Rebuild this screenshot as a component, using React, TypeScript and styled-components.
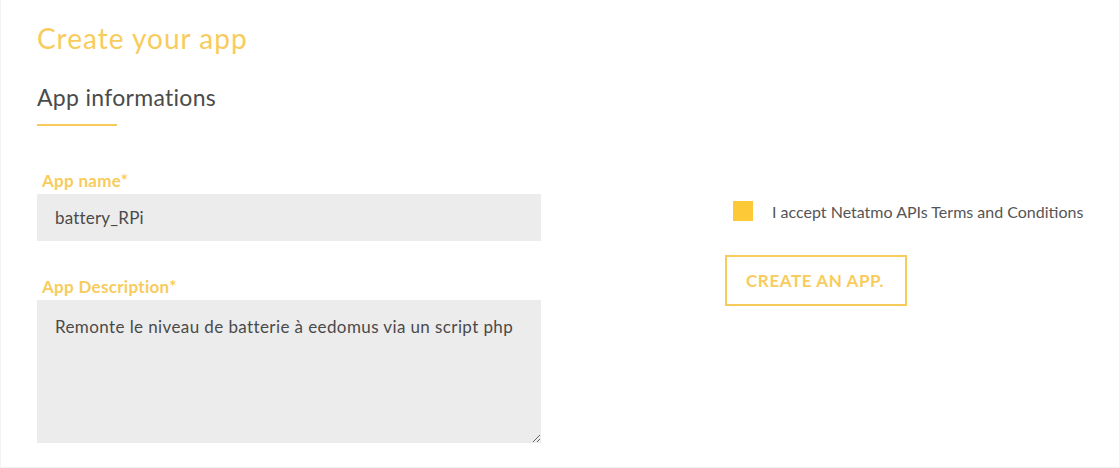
import React from "react";
import styled, { createGlobalStyle } from "styled-components";

const FONT = `Lato, "Liberation Sans", sans-serif`;

const Global = createGlobalStyle`
  html, body { margin: 0; padding: 0; background: #fff; }
  body { font-family: ${FONT}; }
  * { box-sizing: border-box; }
`;

const Page = styled.div`
  width: 1120px;
  height: 468px;
  border: 1px solid #f3f3f3;
  border-top: none;
  padding: 21px 0 0 36px;
`;

const Title = styled.h1`
  margin: 0;
  font-size: 28px;
  letter-spacing: 1px;
  font-weight: 400;
  color: #f8cc5c;
  line-height: 34px;
`;

const Section = styled.h2`
  margin: 28px 0 0 0;
  font-size: 23px;
  letter-spacing: 0.3px;
  font-weight: 400;
  color: #4b4b4b;
  line-height: 28px;
`;

const Underline = styled.div`
  width: 80px;
  height: 2px;
  background: #f8cc5c;
  margin-top: 13px;
`;

const Columns = styled.div`
  display: grid;
  grid-template-columns: 504px auto;
  column-gap: 184px;
  margin-top: 42px;
`;

const Left = styled.div`
  display: flex;
  flex-direction: column;
`;

const Label = styled.label<{ $gap?: number }>`
  display: block;
  font-size: 17px;
  letter-spacing: 0.3px;
  font-weight: 700;
  color: #f8cc5c;
  padding-left: 5px;
  line-height: 26px;
  margin-top: ${(p) => p.$gap ?? 0}px;
`;

const Input = styled.input`
  width: 504px;
  height: 47px;
  border: none;
  background: #ececec;
  padding: 0 18px;
  font-family: ${FONT};
  font-size: 17px;
  letter-spacing: 0.2px;
  color: #4a4a4a;
  outline: none;
`;

const TextArea = styled.textarea`
  width: 504px;
  height: 143px;
  border: none;
  background: #ececec;
  padding: 16px 18px;
  font-family: ${FONT};
  font-size: 17px;
  letter-spacing: 0.4px;
  color: #4a4a4a;
  outline: none;
  resize: vertical;
  display: block;
`;

const Right = styled.div`
  display: flex;
  flex-direction: column;
  align-items: flex-start;
  padding-top: 33px;
`;

const CheckRow = styled.div`
  display: flex;
  align-items: center;
  gap: 19px;
  padding-left: 8px;
`;

const Box = styled.span`
  width: 20px;
  height: 20px;
  background: #fdc937;
  display: inline-block;
`;

const CheckText = styled.span`
  font-size: 16px;
  color: #555;
`;

const Button = styled.button`
  margin-top: 34px;
  width: 182px;
  height: 51px;
  border: 2px solid #f8cc5c;
  background: #fff;
  color: #f8cc5c;
  font-family: ${FONT};
  font-size: 17px;
  letter-spacing: 0.6px;
  font-weight: 700;
  text-align: left;
  padding: 0 0 0 19px;
`;

export default function App() {
  return (
    <>
      <Global />
      <Page>
        <Title>Create your app</Title>
        <Section>App informations</Section>
        <Underline />
        <Columns>
          <Left>
            <Label>App name*</Label>
            <Input defaultValue="battery_RPi" />
            <Label $gap={33}>App Description*</Label>
            <TextArea defaultValue="Remonte le niveau de batterie à eedomus via un script php" />
          </Left>
          <Right>
            <CheckRow>
              <Box />
              <CheckText>I accept Netatmo APIs Terms and Conditions</CheckText>
            </CheckRow>
            <Button>CREATE AN APP.</Button>
          </Right>
        </Columns>
      </Page>
    </>
  );
}
